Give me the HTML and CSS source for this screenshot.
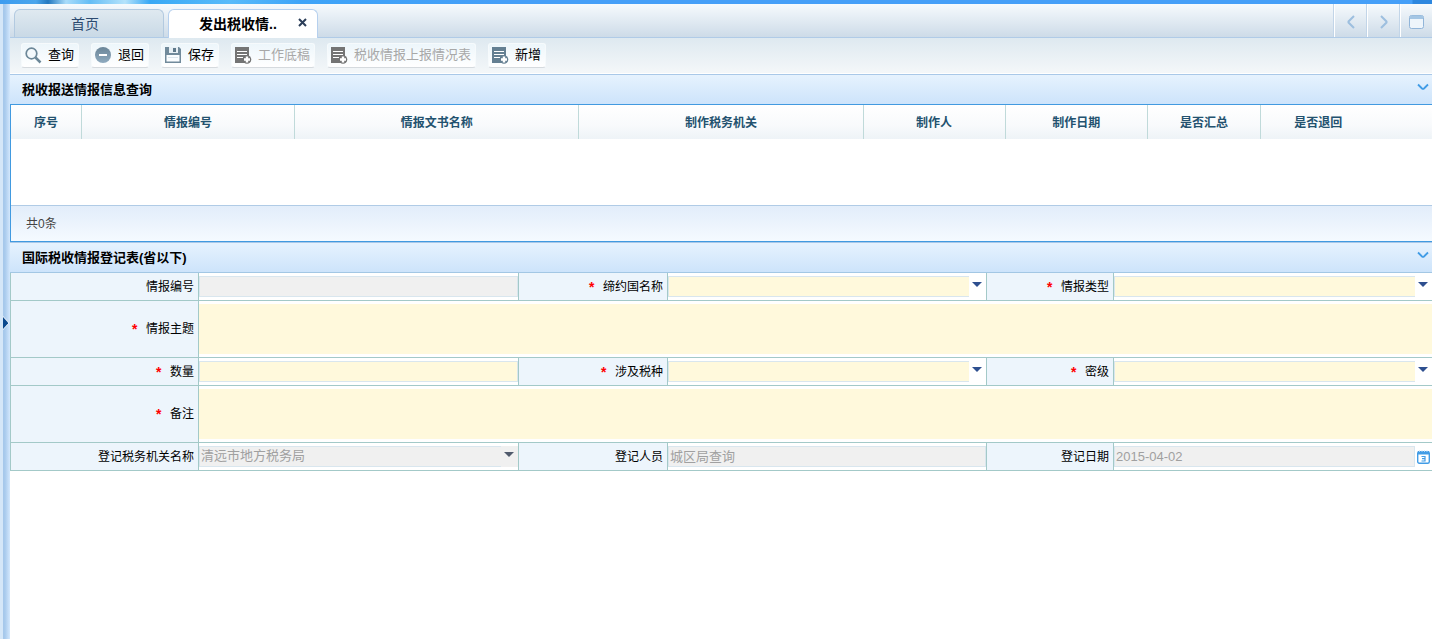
FILE: index.html
```html
<!DOCTYPE html>
<html lang="zh-CN">
<head>
<meta charset="utf-8">
<title>发出税收情报</title>
<link rel="stylesheet" href="styles.css">
</head>
<body>
<svg class="defs" aria-hidden="true">
  <defs>
    <linearGradient id="steel" x1="0" y1="0" x2="0" y2="1">
      <stop offset="0" stop-color="#6b8598"/><stop offset="1" stop-color="#8fabc0"/>
    </linearGradient>
  </defs>
  <symbol id="sheet-add" viewBox="0 0 17 17">
    <path d="M0 0h14v10h-3v6H0z" fill="currentColor"/>
    <path d="M2 4.500h10M2 7.500h10M2 10.500h6" stroke="#fff" stroke-width="1.200"/>
    <circle cx="12" cy="12.500" r="4.300" fill="currentColor"/>
    <path d="M12 9.500v6M9 12.500h6" stroke="#fff" stroke-width="2.400"/>
  </symbol>
  <symbol id="chevron" viewBox="0 0 12 8">
    <path d="M1 1.500l4 4q1 .8 2 0l4-4" fill="none" stroke="#419ce6" stroke-width="1.800"/>
  </symbol>
</svg>
<div class="banner"></div>
<div class="shell">
  <aside class="rail">
    <button class="rail-toggle" type="button" aria-label="展开"><svg width="6" height="14" viewBox="0 0 6 14"><path d="M0 0l5.500 6v2L0 14z" fill="#fff"/><path d="M0 1l5 5.500v1L0 13z" fill="#0c4a8e"/></svg></button>
  </aside>
  <main class="main">
    <div class="tabbar">
      <div class="tabs">
        <button class="tab" type="button">首页</button>
        <div class="tab active">
          <button class="tab-name" type="button">发出税收情..</button>
          <button class="tab-close" type="button" aria-label="关闭"><svg width="9" height="9" viewBox="0 0 9 9"><path d="M1 1l7 7M8 1L1 8" stroke="#2b3d58" stroke-width="2"/></svg></button>
        </div>
      </div>
      <div class="tab-tools">
        <button type="button" aria-label="向左"><svg width="8" height="14" viewBox="0 0 8 14"><path d="M7 1L1.500 6.500v1L7 13" fill="none" stroke="#9dbfdf" stroke-width="2"/></svg></button>
        <button type="button" aria-label="向右"><svg width="8" height="14" viewBox="0 0 8 14"><path d="M1 1l5.500 5.500v1L1 13" fill="none" stroke="#9dbfdf" stroke-width="2"/></svg></button>
        <button type="button" aria-label="窗口"><svg width="15" height="14" viewBox="0 0 15 14"><rect x=".5" y=".5" width="14" height="13" rx="2" fill="#eef5fb" stroke="#91b5d9"/><path d="M1 4V2q0-1.500 1.500-1.500h10Q14 .5 14 2v2z" fill="#a4c6e4"/></svg></button>
      </div>
    </div>

    <div class="toolbar">
      <button class="tool" type="button"><svg width="17" height="17" viewBox="0 0 17 17"><circle cx="6.500" cy="6.500" r="5.300" fill="#f4f9fc" stroke="#6c8798" stroke-width="1.700"/><path d="M10.500 10.500l5 5" stroke="#6c8798" stroke-width="2.500"/></svg>查询</button>
      <button class="tool" type="button"><svg width="17" height="17" viewBox="0 0 17 17"><circle cx="8" cy="8" r="8" fill="url(#steel)"/><rect x="4" y="7" width="8" height="2" fill="#fff"/></svg>退回</button>
      <button class="tool" type="button"><svg width="17" height="17" viewBox="0 0 17 17"><path d="M0 0h14l2 2v14H0z" fill="#718a9b"/><path d="M4 0h9v6H4z" fill="#e8f0f5"/><rect x="8" y="1" width="3" height="4" fill="#5e788a"/><path d="M1.500 8h13v6.500h-13z" fill="#fafdff"/><path d="M3 10.500h10" stroke="#dce6ee"/></svg>保存</button>
      <button class="tool" type="button" disabled><svg width="17" height="17"><use href="#sheet-add"/></svg>工作底稿</button>
      <button class="tool" type="button" disabled><svg width="17" height="17"><use href="#sheet-add"/></svg>税收情报上报情况表</button>
      <button class="tool" type="button"><svg width="17" height="17"><use href="#sheet-add"/></svg>新增</button>
    </div>

    <section>
      <header class="section-head">
        <h2>税收报送情报信息查询</h2>
        <button type="button" aria-label="收起"><svg width="12" height="8"><use href="#chevron"/></svg></button>
      </header>
      <div class="list">
        <table>
          <colgroup><col class="w5"><col class="w15"><col class="w20"><col class="w20"><col class="w10"><col class="w10"><col class="w8"><col class="w8"><col></colgroup>
          <thead>
            <tr><th>序号</th><th>情报编号</th><th>情报文书名称</th><th>制作税务机关</th><th>制作人</th><th>制作日期</th><th>是否汇总</th><th>是否退回</th><td></td></tr>
          </thead>
        </table>
        <div class="list-body"></div>
        <footer class="list-foot">共0条</footer>
      </div>
    </section>

    <section>
      <header class="section-head form-head">
        <h2>国际税收情报登记表(省以下)</h2>
        <button type="button" aria-label="收起"><svg width="12" height="8"><use href="#chevron"/></svg></button>
      </header>
      <form class="form">
        <label for="code">情报编号</label>
        <div class="cell"><input id="code" type="text" disabled></div>
        <label for="country"><span class="req">*</span>缔约国名称</label>
        <div class="cell drop"><select id="country"><option></option></select><i class="arrow"></i></div>
        <label for="kind"><span class="req">*</span>情报类型</label>
        <div class="cell drop"><select id="kind"><option></option></select><i class="arrow"></i></div>

        <label for="subject"><span class="req">*</span>情报主题</label>
        <div class="cell wide"><textarea id="subject"></textarea></div>

        <label for="count"><span class="req">*</span>数量</label>
        <div class="cell"><input id="count" type="text"></div>
        <label for="tax"><span class="req">*</span>涉及税种</label>
        <div class="cell drop"><select id="tax"><option></option></select><i class="arrow"></i></div>
        <label for="level"><span class="req">*</span>密级</label>
        <div class="cell drop"><select id="level"><option></option></select><i class="arrow"></i></div>

        <label for="note"><span class="req">*</span>备注</label>
        <div class="cell wide"><textarea id="note"></textarea></div>

        <label for="office">登记税务机关名称</label>
        <div class="cell drop off"><select id="office" disabled><option>清远市地方税务局</option></select><i class="arrow"></i></div>
        <label for="person">登记人员</label>
        <div class="cell"><input id="person" type="text" value="城区局查询" disabled></div>
        <label for="date">登记日期</label>
        <div class="cell"><input id="date" class="date" type="text" value="2015-04-02" disabled><button class="pick" type="button" aria-label="选择日期"><svg width="13" height="14" viewBox="0 0 13 14"><rect x=".7" y="1.700" width="11.600" height="11.600" rx="1.500" fill="#fff" stroke="#419ce6" stroke-width="1.400"/><path d="M1 1h11v3.500H1z" fill="#419ce6"/><path d="M2.500 0v2M5 0v2M7.500 0v2M10 0v2" stroke="#cfe5f8" stroke-width=".8"/><path d="M4.500 6.500H8v4.500H4.500M5 8.700h3" fill="none" stroke="#419ce6" stroke-width="1.200"/></svg></button></div>
      </form>
    </section>
  </main>
</div>
</body>
</html>
```
FILE: styles.css
```css
* { box-sizing: border-box; }
body {
  margin: 0;
  min-height: 100vh;
  display: flex;
  flex-direction: column;
  background: #fff;
  color: #000;
  font: 12px/18px "Liberation Sans", "Noto Sans CJK SC", sans-serif;
}
button, input, select, textarea { font: inherit; color: inherit; margin: 0; border-radius: 0; }
button { padding: 0; border: 0; background: none; }
svg { display: block; flex: none; }
.defs { position: absolute; width: 0; height: 0; }

.banner {
  height: 4px;
  background: linear-gradient(90deg, #3c9cf0 0, #4ba6ec 36px, #2479c0 48px, #a9dcfa 66px, #64bdf5 90px, #b5e3fb 125px, #38a8f5 150px, #58bbfa 230px, #3ea4f8 300px, #459ff8 500px, #459ff8 1412px, #2d87df 1413px);
}
.shell { flex: 1; display: flex; }
.rail {
  width: 10px;
  flex: none;
  display: flex;
  align-items: center;
  padding: 2px 0 0 3px;
  background: linear-gradient(90deg, #d5e7f8 3px, #a5c7ea 3px, #a9cbed 5px, #cbe2fa 9px, #d4e9fd 10px);
}
.main { flex: 1; min-width: 0; }

.tabbar {
  height: 34px;
  display: flex;
  justify-content: space-between;
  padding-left: 4px;
  border-bottom: 1px solid #b0cbe7;
  background: linear-gradient(#f6fafd, #cddbe8);
}
.tabs { display: flex; gap: 4px; padding-top: 5px; }
.tab {
  width: 150px;
  height: 28px;
  padding: 0 8px 0 0;
  border: 1px solid #b3cae0;
  border-bottom: 0;
  border-radius: 6px 6px 0 0;
  background: linear-gradient(#dfe9f0, #c9d9e6);
  color: #2c4a70;
  font-size: 14px;
}
.tab.active {
  height: 29px;
  display: flex;
  align-items: center;
  justify-content: space-between;
  padding: 0 10px 0 30px;
  border-color: #b6d0ee;
  background: #fff;
  color: #000;
}
.tab-name { font-weight: bold; }
.tab-close { margin-bottom: 3px; }
.tab-tools { display: flex; }
.tab-tools button {
  width: 33px;
  display: flex;
  align-items: center;
  justify-content: center;
  padding-top: 3px;
  border-left: 1px solid #fff;
  box-shadow: -1px 0 #c2d5e8;
}
.tab-tools button:last-child { width: 32px; }

.toolbar {
  display: flex;
  flex-wrap: wrap;
  gap: 12px;
  padding: 5px 11px;
  border-bottom: 1px solid #fff;
  background: linear-gradient(#dee9f0, #f4f7f9);
}
.tool {
  height: 25px;
  display: flex;
  align-items: center;
  gap: 6px;
  padding: 0 4px 1px 3px;
  border: 1px solid #f6fafc;
  border-bottom-color: #d5dade;
  border-radius: 3px;
  background: linear-gradient(#edf6fb, #fff);
  font-size: 13px;
}
.tool svg { color: #647f92; }
.tool:disabled { color: #a8a8a8; }
.tool:disabled svg { color: #747474; }

.section-head {
  height: 31px;
  display: flex;
  align-items: center;
  justify-content: space-between;
  padding: 0 3px 0 12px;
  border-top: 1px solid #a9c8e8;
  border-bottom: 1px solid #419ae0;
  background: linear-gradient(#e6f2fe, #cde4fb);
}
.form-head { border-bottom-color: #a3c7e4; }
.section-head h2 { margin: 0; font-size: 13px; font-weight: bold; }
.section-head button { margin-bottom: 6px; }

.list { border-left: 1px solid #419ae0; border-bottom: 1px solid #419ae0; }
table { width: 100%; table-layout: fixed; border-collapse: separate; border-spacing: 0; }
.w5 { width: 5%; }
.w8 { width: 8%; }
.w10 { width: 10%; }
.w15 { width: 15%; }
.w20 { width: 20%; }
thead { background: linear-gradient(#fff, #f8fafc 60%, #eef3f7); }
th {
  height: 34px;
  padding: 2px 0 0;
  border-right: 1px solid #c0dada;
  color: #23526f;
  font-weight: bold;
}
th:nth-child(8) { border-right: 0; }
.list-body { height: 66px; }
.list-foot {
  height: 36px;
  padding: 9px 15px;
  border-top: 1px solid #b0cbe6;
  background: linear-gradient(#e2edfa, #f5faff);
  color: #444;
}

.form {
  display: grid;
  grid-template-columns: 188fr 320fr 149fr 319fr 127fr 318fr;
  border-left: 1px solid #a3c9c8;
}
.form label {
  display: flex;
  align-items: center;
  justify-content: flex-end;
  padding-right: 4px;
  border-right: 1px solid #a3c9c8;
  border-bottom: 1px solid #a3c9c8;
  background: #edf5fc;
}
.req {
  margin-right: 7px;
  padding-top: 4px;
  color: #f00;
  font: bold 14px/18px "Liberation Mono", monospace;
}
.cell {
  position: relative;
  min-width: 0;
  display: flex;
  padding: 3px 0;
  border-right: 1px solid #a3c9c8;
  border-bottom: 1px solid #a3c9c8;
}
.cell:nth-child(6), .cell:nth-child(14), .cell:last-child, .wide { border-right: 0; }
.wide { grid-column: span 5; }
.cell input, .cell select {
  flex: 1;
  min-width: 0;
  width: 100%;
  height: 21px;
  padding: 0 1px 3px;
  border: 1px solid #d9e6ee;
  background: #fff9dc;
  font-size: 13px;
}
.cell select { appearance: none; border-right: 0; }
.cell .date { padding-bottom: 0; }
.cell textarea {
  width: 100%;
  height: 50px;
  border: 0;
  background: #fff9dc;
  resize: none;
}
.cell input:disabled, .cell select:disabled { background: #f0f0f0; color: #a0a0a0; opacity: 1; }
.drop select { margin-right: 17px; }
.arrow {
  position: absolute;
  right: 4px;
  top: 9px;
  border: 5px solid transparent;
  border-top-color: #2e4f8f;
  border-bottom: 0;
  pointer-events: none;
}
.off::after { content: ""; position: absolute; right: 0; top: 3px; width: 17px; height: 21px; background: #f0f0f0; }
.off .arrow { z-index: 1; border-top-color: #505a6c; }
.pick { flex: none; width: 17px; display: flex; align-items: center; justify-content: center; }
```
